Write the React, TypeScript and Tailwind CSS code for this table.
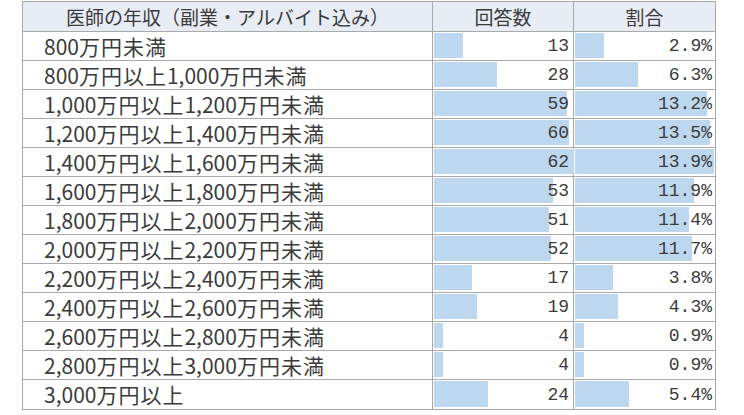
import { FC } from "react";

const rows: [string, number, number][] = [
  ["800万円未満", 13, 2.9],
  ["800万円以上1,000万円未満", 28, 6.3],
  ["1,000万円以上1,200万円未満", 59, 13.2],
  ["1,200万円以上1,400万円未満", 60, 13.5],
  ["1,400万円以上1,600万円未満", 62, 13.9],
  ["1,600万円以上1,800万円未満", 53, 11.9],
  ["1,800万円以上2,000万円未満", 51, 11.4],
  ["2,000万円以上2,200万円未満", 52, 11.7],
  ["2,200万円以上2,400万円未満", 17, 3.8],
  ["2,400万円以上2,600万円未満", 19, 4.3],
  ["2,600万円以上2,800万円未満", 4, 0.9],
  ["2,800万円以上3,000万円未満", 4, 0.9],
  ["3,000万円以上", 24, 5.4],
];

// kanji are a little spaced out in the original sheet
const Label: FC<{ text: string }> = ({ text }) => (
  <span>
    {text.split(/([0-9,]+)/).map((part, i) =>
      i % 2 === 1 ? (
        <span key={i}>{part}</span>
      ) : (
        <span key={i} className="tracking-[1px]">
          {part}
        </span>
      )
    )}
  </span>
);

const App: FC = () => {
  return (
    <div className="w-[744px] h-[415px] bg-white pt-px pl-[22px] font-['Noto_Sans_CJK_JP',sans-serif] leading-none text-[#3b3b3b]">
      <div className="grid w-max grid-cols-[409px_140px_141px] gap-px bg-[#a9a9a9] p-px">
        <div className="h-[29px] bg-[#e7ecf5] flex items-center justify-center text-[19px]">
          医師の年収（副業・アルバイト込み）
        </div>
        <div className="h-[29px] bg-[#e7ecf5] flex items-center justify-center text-[19px]">
          回答数
        </div>
        <div className="h-[29px] bg-[#e7ecf5] flex items-center justify-center text-[19px]">
          割合
        </div>
        {rows.map(([label, count, pct], i) => {
          const h = i === rows.length - 1 ? "h-[29px]" : "h-[28px]";
          return [
            <div key={`l${i}`} className={`${h} bg-white flex items-center pl-[21px] text-[21px]`}>
              <Label text={label} />
            </div>,
            <div
              key={`c${i}`}
              className={`${h} bg-white relative flex items-center justify-end pr-[4px] font-['Liberation_Mono',monospace] text-[18px]`}
            >
              <div
                className="absolute left-px top-px bottom-[2px] bg-[#bdd7ee]"
                style={{ width: Math.round(count * 2.25) }}
              />
              <span className="relative">{count}</span>
            </div>,
            <div
              key={`p${i}`}
              className={`${h} bg-white relative flex items-center justify-end pr-[3px] font-['Liberation_Mono',monospace] text-[18px]`}
            >
              <div
                className="absolute left-px top-px bottom-[2px] bg-[#bdd7ee]"
                style={{ width: Math.round(pct * 10) }}
              />
              <span className="relative">{pct.toFixed(1)}%</span>
            </div>,
          ];
        })}
      </div>
    </div>
  );
};

export default App;
